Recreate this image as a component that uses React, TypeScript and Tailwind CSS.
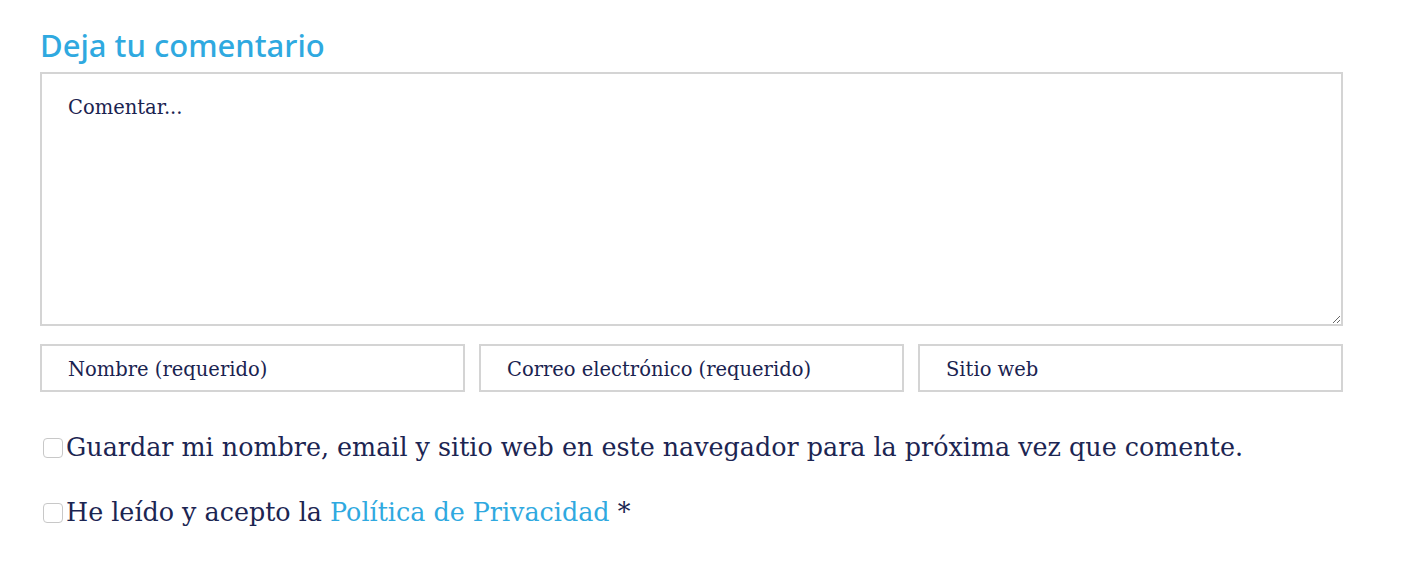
import React from 'react'

const slab = "font-['DejaVu_Serif',serif]"

function Field({ placeholder }: { placeholder: string }) {
  return (
    <input
      type="text"
      placeholder={placeholder}
      className={`h-12 w-full border-2 border-[#d4d4d4] bg-white px-[26px] pt-[2px] text-[19.5px] text-[#1a2350] placeholder:text-[#1a2350] outline-none ${slab}`}
    />
  )
}

function Box() {
  return <span className="mr-[3px] ml-[3px] mt-[2px] h-[20px] w-[20px] shrink-0 rounded-[4px] border border-[#c8c8c8] bg-white"></span>
}

function App() {
  return (
    <div className="min-h-[580px] w-[1418px] bg-white pl-10 pt-[26px]">
      <div className="w-[1303px]">
        <h2 className="font-['Noto_Sans',sans-serif] text-[31px] font-medium leading-[38px] text-[#2fa9e0]">
          Deja tu comentario
        </h2>
        <textarea
          placeholder="Comentar..."
          className={`mt-[8px] block h-[254px] w-full border-2 border-[#d4d4d4] bg-white px-[26px] pt-[22px] text-[19.5px] leading-6 text-[#1a2350] placeholder:text-[#1a2350] outline-none ${slab}`}
        />
        <div className="mt-[18px] grid grid-cols-3 gap-[14px]">
          <Field placeholder="Nombre (requerido)" />
          <Field placeholder="Correo electrónico (requerido)" />
          <Field placeholder="Sitio web" />
        </div>
        <div className={`mt-[37px] flex flex-col gap-[29px] text-[25.4px] leading-9 text-[#1c2552] ${slab}`}>
          <label className="flex items-center">
            <Box />
            Guardar mi nombre, email y sitio web en este navegador para la próxima vez que comente.
          </label>
          <label className="flex items-center">
            <Box />
            He leído y acepto la&nbsp;<a className="text-[#2fa9e0]">Política de Privacidad</a>&nbsp;*
          </label>
        </div>
      </div>
    </div>
  )
}

export default App
